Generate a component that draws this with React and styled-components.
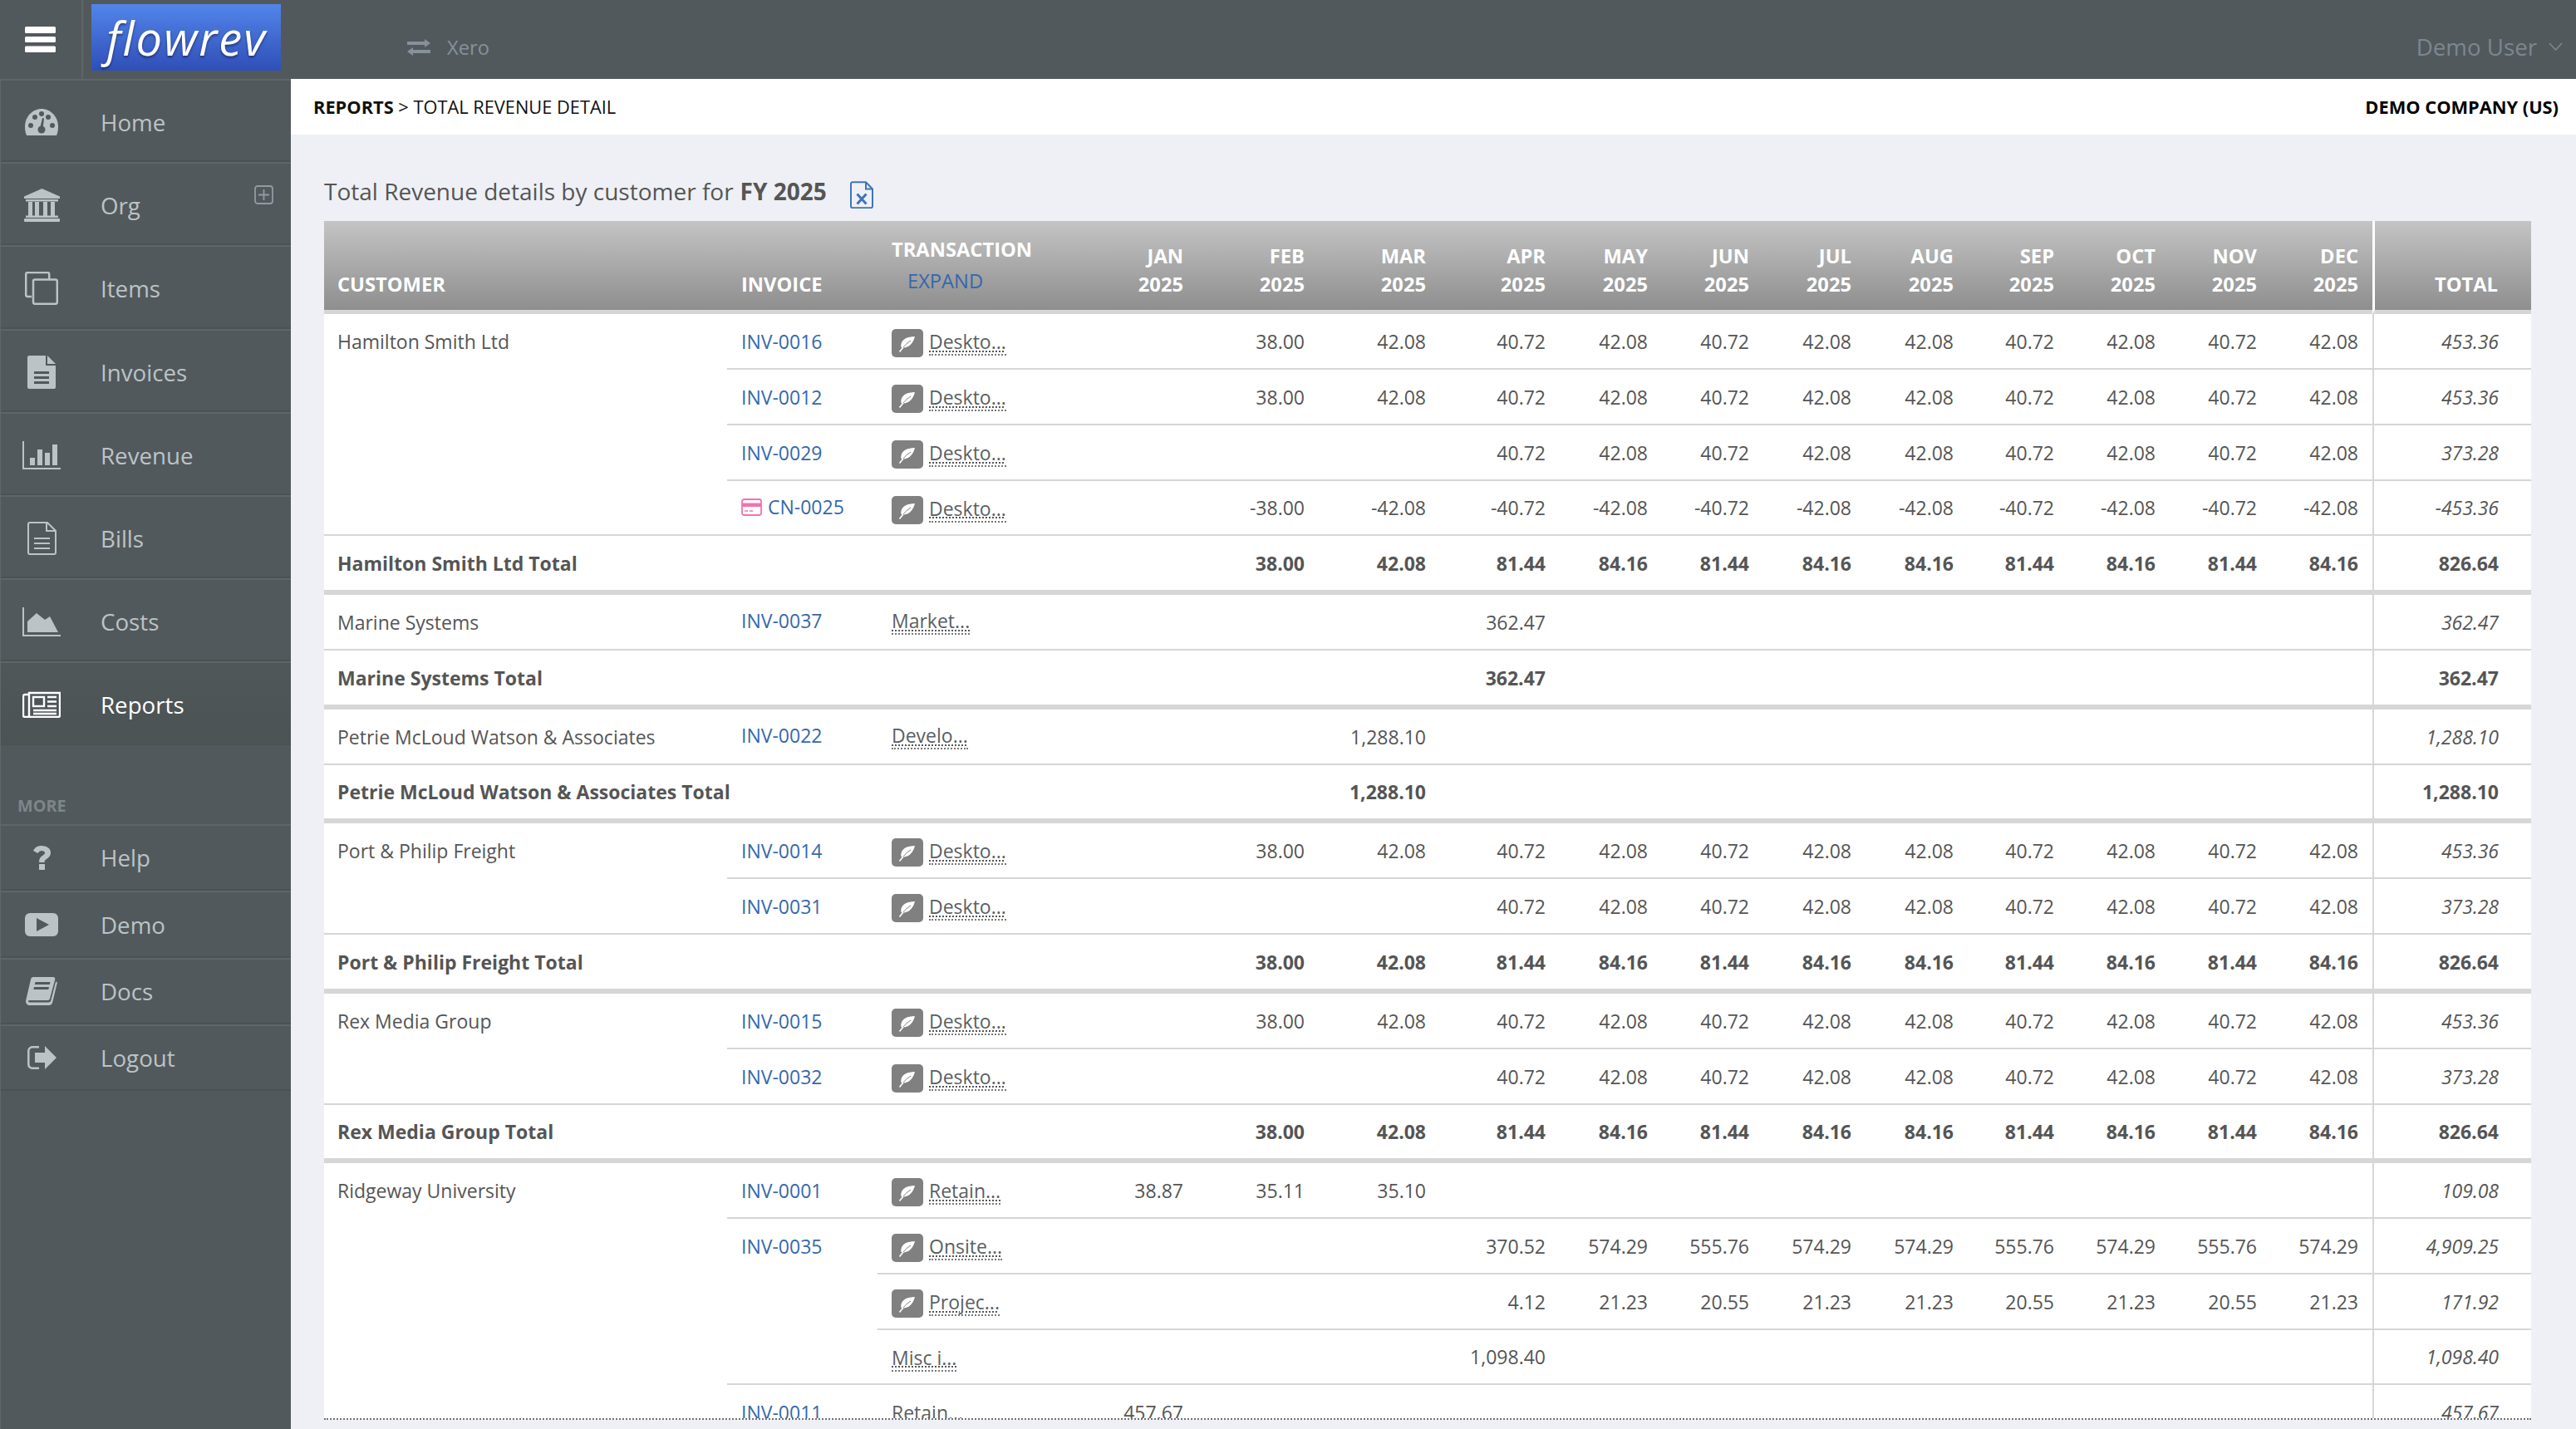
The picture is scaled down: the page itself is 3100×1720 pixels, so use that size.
import React from 'react';
import styled, { createGlobalStyle } from 'styled-components';

const Global = createGlobalStyle`
  html, body { margin: 0; padding: 0; background: #eef0f5; overflow: hidden; }
  body { font-family: "Open Sans", "Liberation Sans", sans-serif; }
  * { box-sizing: border-box; }
`;

const Page = styled.div`
  width: 3100px;
  height: 1720px;
  display: flex;
  flex-direction: column;
  overflow: hidden;
`;
const TopBar = styled.header`
  height: 95px;
  flex: none;
  display: flex;
  align-items: stretch;
  background: #52595c;
`;
const MenuCell = styled.div`
  width: 100px;
  flex: none;
  display: flex;
  align-items: center;
  padding: 0 0 0 30px;
  border-right: 2px solid #5e6668;
`;
const Logo = styled.div`
  width: 228px;
  height: 80px;
  margin: 5px 0 0 10px;
  display: flex;
  align-items: center;
  padding-left: 18px;
  background: linear-gradient(#5285ea, #2f4fb8);
  color: #fff;
  font-style: italic;
  font-size: 56px;
  letter-spacing: 2px;
  line-height: 1;
  text-shadow: 0 2px 3px rgba(0, 0, 0, 0.45);
`;
const Sync = styled.div`
  margin: 19px 0 0 152px;
  display: flex;
  align-items: center;
  gap: 20px;
  color: #87919a;
  font-size: 23.7px;
`;
const UserMenu = styled.div`
  margin: 0 16px 0 auto;
  display: flex;
  align-items: center;
  gap: 14px;
  padding-top: 17px;
  color: #7c8790;
  font-size: 27.7px;
`;
const Body = styled.div`
  flex: 1;
  display: flex;
  min-height: 0;
`;
const Side = styled.nav`
  width: 350px;
  flex: none;
  background: #52595c;
  border-left: 1px solid #5f6769;
`;
const NavItem = styled.a`
  position: relative;
  display: flex;
  align-items: center;
  height: ${(p) => (p.$small ? 80.3 : 100.2)}px;
  padding: ${(p) => (p.$small ? 0 : 4)}px 0 0 26px;
  border-top: 2px solid #5e6668;
  border-bottom: 2px solid #4a5254;
  color: ${(p) => (p.$active ? '#fff' : '#bcc3c6')};
  font-size: 27.7px;
  background: ${(p) => (p.$active ? 'linear-gradient(#4f5759, #4b5355)' : 'transparent')};
`;
const IconSlot = styled.span`
  width: 46px;
  height: 40px;
  flex: none;
  margin-right: 48px;
  display: flex;
  align-items: center;
  justify-content: center;
  color: inherit;
`;
const Expander = styled.span`
  position: absolute;
  left: 305px;
  top: 26px;
  display: flex;
  color: #8f9ca3;
`;
const MoreHeading = styled.div`
  height: 95.6px;
  padding: 59px 0 0 20px;
  color: #7d8689;
  font-size: 19.8px;
  font-weight: 700;
  line-height: 28px;
`;
const Main = styled.main`
  flex: 1;
  min-width: 0;
  display: flex;
  flex-direction: column;
`;
const CrumbBar = styled.div`
  height: 67px;
  flex: none;
  display: flex;
  align-items: center;
  justify-content: space-between;
  padding: 0 21px 0 27px;
  background: #fff;
  color: #111;
  font-size: 21.8px;
`;
const Crumb = styled.div`
  b { font-weight: 700; }
`;
const Company = styled.div`
  font-weight: 700;
  color: #000;
`;
const Content = styled.div`
  flex: 1;
  min-height: 0;
  padding-left: 40px;
  background: #eef0f5;
`;
const Title = styled.h1`
  margin: 0;
  height: 104px;
  padding-top: 50px;
  display: flex;
  align-items: flex-start;
  font-size: 28px;
  font-weight: 400;
  line-height: 36px;
  color: #555;
  b { font-weight: 700; margin-left: 8px; }
`;
const ExportIcon = styled.span`
  display: flex;
  margin: 6px 0 0 28px;
  color: #3f74b8;
`;
const TableClip = styled.div`
  width: 2656px;
  height: 1443px;
  overflow: hidden;
  background: #fff;
  border-bottom: 2px dotted #6f6f6f;
`;
const Table = styled.table`
  width: 2656px;
  table-layout: fixed;
  border-collapse: separate;
  border-spacing: 0;
  font-size: 23px;
  line-height: 34px;
  color: #555;
`;
const Head = styled.th`
  height: 112px;
  padding: 0 ${(p) => (p.$num ? 17 : 0)}px 14px ${(p) => p.$left || 0}px;
  border-bottom: 5px solid #d6d6d6;
  ${(p) => (p.$total ? 'border-left: 3px solid #fff; padding-right: 40px;' : '')}
  background: linear-gradient(#c4c4c4, #8e8e8e);
  color: #fff;
  font-size: 23.7px;
  font-weight: 700;
  vertical-align: bottom;
  text-align: ${(p) => (p.$num ? 'right' : 'left')};
`;
const TransHead = styled(Head)`
  vertical-align: top;
  padding-top: 17px;
  padding-bottom: 0;
`;
const Expand = styled.div`
  margin-top: 4px;
  padding-left: 19px;
  color: #3568ab;
  font-weight: 400;
`;
const Row = styled.tr`
  height: ${(p) => p.$h}px;
`;
const Customer = styled.td`
  padding: ${(p) => (p.$top ? '16px' : '0')} 0 0 16px;
  vertical-align: ${(p) => (p.$top ? 'top' : 'middle')};
  border-bottom: ${(p) => (p.$line ? '2px solid #d6d6d6' : '0')};
  white-space: nowrap;
`;
const TotalLabel = styled.td`
  padding-left: 16px;
  font-weight: 700;
  white-space: nowrap;
  border-bottom: 6px solid #d6d6d6;
`;
const InvoiceCell = styled.td`
  padding: ${(p) => (p.$top ? '16px' : '0')} 0 ${(p) => (p.$compact ? 4 : 0)}px 17px;
  vertical-align: ${(p) => (p.$top ? 'top' : 'middle')};
  border-bottom: 2px solid #d6d6d6;
  white-space: nowrap;
`;
const InvoiceLink = styled.a`
  display: inline-flex;
  align-items: center;
  gap: 7px;
  color: #3568ab;
`;
const TransCell = styled.td`
  padding: 0 0 ${(p) => (p.$compact ? 4 : 0)}px 17px;
  border-bottom: 2px solid #d6d6d6;
`;
const Trans = styled.div`
  display: flex;
  align-items: flex-start;
  gap: 7px;
  padding-top: ${(p) => (p.$plain ? 3 : 5)}px;
`;
const LeafBox = styled.span`
  width: 38px;
  height: 34px;
  flex: none;
  display: flex;
  border-radius: 5px;
  background: #808080;
`;
const TransText = styled.a`
  display: block;
  line-height: 30px;
  height: 32px;
  color: #5a5f63;
  text-decoration: underline dotted #555 2px;
  text-underline-offset: 2px;
  border-bottom: 2px dotted #777;
`;
const Num = styled.td`
  padding-right: 17px;
  text-align: right;
  white-space: nowrap;
  font-weight: ${(p) => (p.$bold ? 700 : 400)};
  border-bottom: ${(p) => (p.$bold ? 6 : 2)}px solid #d6d6d6;
`;
const RowTotal = styled.td`
  padding-right: 39px;
  text-align: right;
  white-space: nowrap;
  font-style: ${(p) => (p.$bold ? 'normal' : 'italic')};
  font-weight: ${(p) => (p.$bold ? 700 : 400)};
  border-left: 2px solid #d6d6d6;
  border-bottom: ${(p) => (p.$bold ? 6 : 2)}px solid #d6d6d6;
`;

/* Icons */
const Burger = () => (
  <svg width="37" height="31" viewBox="0 0 37 31" fill="#fff">
    <rect y="0" width="37" height="8" rx="1.5" />
    <rect y="12" width="37" height="7" rx="1.5" />
    <rect y="23.5" width="37" height="7.5" rx="1.5" />
  </svg>
);
const ExchangeIcon = () => (
  <svg width="28" height="20" viewBox="0 0 28 20" fill="currentColor">
    <path d="M0 3h21V0l7 5-7 5V7H0z" />
    <path d="M28 13H7v-3l-7 5 7 5v-3h21z" />
  </svg>
);
const ChevronIcon = () => (
  <svg width="17" height="10" viewBox="0 0 17 10" fill="none" stroke="currentColor" strokeWidth="1.6">
    <path d="M1 1l7.5 8L16 1" />
  </svg>
);
const GaugeIcon = () => (
  <svg width="40" height="32" viewBox="0 0 40 32">
    <path fill="currentColor" d="M2 32C.7 29 0 26 0 21.5 0 9.6 9 0 20 0s20 9.600 20 21.500c0 4.500-.7 7.500-2 10.500z" />
    <g fill="#52595c">
      <circle cx="7" cy="20" r="3" />
      <circle cx="12" cy="10" r="3" />
      <circle cx="20" cy="6" r="3" />
      <circle cx="28" cy="10" r="3" />
      <circle cx="33" cy="20" r="3" />
      <circle cx="20" cy="25" r="4.5" />
      <path d="M18 24l3-13 2 .5-1.500 13z" />
    </g>
  </svg>
);
const BankIcon = () => (
  <svg width="43" height="40" viewBox="0 0 43 40" fill="currentColor">
    <path d="M21.500 0L43 9.500V12H0V9.500z" />
    <rect x="2" y="13" width="39" height="2.5" />
    <rect x="5" y="16" width="5" height="17" />
    <rect x="13" y="16" width="5" height="17" />
    <rect x="23" y="16" width="5" height="17" />
    <rect x="32" y="16" width="5" height="17" />
    <rect x="2" y="32.5" width="39" height="2.5" />
    <rect x="0" y="36" width="43" height="4" rx="1" />
  </svg>
);
const CopyIcon = () => (
  <svg width="40" height="40" viewBox="0 0 40 40" fill="none" stroke="currentColor" strokeWidth="2.5">
    <path d="M8 30H3a2 2 0 0 1-1.800-2V3a2 2 0 0 1 2-2h24a2 2 0 0 1 2 2v6" />
    <rect x="10" y="9.5" width="28.8" height="29.3" rx="2" />
  </svg>
);
const FileSolidIcon = () => (
  <svg width="34" height="40" viewBox="0 0 34 40">
    <path fill="currentColor" d="M2 0h20v12h12v26a2 2 0 0 1-2 2H2a2 2 0 0 1-2-2V2a2 2 0 0 1 2-2z" />
    <path fill="currentColor" d="M24 0l10 10H24z" />
    <g fill="#52595c">
      <rect x="8" y="19" width="18" height="3" />
      <rect x="8" y="25" width="18" height="3" />
      <rect x="8" y="31" width="18" height="3" />
    </g>
  </svg>
);
const BarsIcon = () => (
  <svg width="46" height="34" viewBox="0 0 46 34" fill="currentColor">
    <path d="M0 0h2v32h44v2H0z" />
    <rect x="9" y="20" width="6" height="9" />
    <rect x="18" y="10" width="6" height="19" />
    <rect x="27" y="14" width="6" height="15" />
    <rect x="36" y="4" width="6" height="25" />
  </svg>
);
const FileLinesIcon = () => (
  <svg width="35" height="40" viewBox="0 0 35 40" fill="none" stroke="currentColor" strokeWidth="2">
    <path d="M24 1H3a2 2 0 0 0-2 2v34a2 2 0 0 0 2 2h29a2 2 0 0 0 2-2V11z" />
    <path d="M23 1v10h11" />
    <path d="M8 20h19M8 26h19M8 32h19" />
  </svg>
);
const AreaIcon = () => (
  <svg width="46" height="35" viewBox="0 0 46 35" fill="currentColor">
    <path d="M0 0h2v33h44v2H0z" />
    <path d="M6 30V17L17 7l10 8 6-4 10 19z" />
  </svg>
);
const PaperIcon = () => (
  <svg width="46" height="32" viewBox="0 0 46 32" fill="none" stroke="currentColor" strokeWidth="2.4">
    <path d="M7 4H3a2 2 0 0 0-2 2v23a2 2 0 0 0 2 2h40a2 2 0 0 0 2-2V2H8v28" />
    <rect x="13" y="7" width="13" height="11" />
    <path d="M30 7h11M30 12.500h11M30 18h11M13 23h28M13 27h28" />
  </svg>
);
const HelpIcon = () => (
  <svg width="22" height="29" viewBox="0 0 22 29" fill="currentColor">
    <path d="M1 6C3 2 6 0 11 0c6 0 11 3 11 8 0 4-2 6-5 8-2 1.500-2.500 2-2.500 4H8c0-4 1-6 4-8 2-1.300 3-2 3-3.500C15 7 13 6 11 6 9 6 8 7 6.500 9z" />
    <rect x="8" y="22" width="7" height="7" />
  </svg>
);
const VideoIcon = () => (
  <svg width="40" height="28" viewBox="0 0 40 28">
    <rect width="40" height="28" rx="6" fill="currentColor" />
    <path d="M14 6l15 8-15 8z" fill="#52595c" />
  </svg>
);
const BookIcon = () => (
  <svg width="38" height="34" viewBox="0 0 38 34">
    <path fill="currentColor" d="M9 0h24c2 0 2.600 1.500 2.200 3L29 26c-.5 1.500-1.500 2-3 2H5c-2.500 0-3 2-.5 2.500H27c2 0 2.800-.7 3.300-2.500L36 6c.2-.7 2-.3 1.800 1l-5.500 23c-.5 2.500-2 4-5 4H5c-3.500 0-5.500-3-4.800-6L6 3c.4-2 1.500-3 3-3z" />
    <path fill="#52595c" d="M11.500 6h18l-.7 3h-18zM10 12h18l-.7 3h-18z" />
  </svg>
);
const LogoutIcon = () => (
  <svg width="35" height="28" viewBox="0 0 35 28">
    <path fill="none" stroke="currentColor" strokeWidth="2.5" d="M14 1.300H6a4.500 4.500 0 0 0-4.700 4.500v16.400A4.500 4.500 0 0 0 6 26.700h8" />
    <path fill="currentColor" d="M21 0l14 14-14 14v-8H9V8h12z" />
  </svg>
);
const PlusBox = () => (
  <svg width="23" height="23" viewBox="0 0 23 23" fill="none" stroke="currentColor" strokeWidth="1.8">
    <rect x="1" y="1" width="21" height="21" rx="3" />
    <path d="M11.500 5v13M5 11.500h13" />
  </svg>
);
const ExcelIcon = () => (
  <svg width="28" height="33" viewBox="0 0 28 33" fill="none" stroke="currentColor" strokeWidth="2">
    <path d="M19 1.200H3a2 2 0 0 0-2 2v27a2 2 0 0 0 2 2h22a2 2 0 0 0 2-2V9.500z" />
    <path d="M19 1.500V9.500h8" />
    <path d="M8.500 15.500l11 12M19.500 15.500l-11 12" strokeWidth="3" />
  </svg>
);
const CardIcon = () => (
  <svg width="25" height="21" viewBox="0 0 25 21">
    <rect x="1" y="1" width="23" height="19" rx="2.5" fill="none" stroke="#f272ae" strokeWidth="1.8" />
    <rect x="1" y="5.5" width="23" height="4.5" fill="#f272ae" />
    <path d="M4 15h4M10 15h4" stroke="#f272ae" strokeWidth="1.6" />
  </svg>
);
const LeafIcon = () => (
  <svg width="38" height="34" viewBox="0 0 38 34">
    <path fill="#fff" d="M28 9c-9 .5-15 2.500-16.500 9-.5 2-.2 3.500.5 4.500 8 1 14-5 16-13.500z" />
    <path fill="none" stroke="#808080" strokeWidth="1" d="M23 14c-4 2.500-7 5.500-10 9" />
    <path fill="none" stroke="#fff" strokeWidth="1.6" d="M14 22l-4.500 5.500" />
  </svg>
);

const mainNav = [
  ['Home', GaugeIcon],
  ['Org', BankIcon, true],
  ['Items', CopyIcon],
  ['Invoices', FileSolidIcon],
  ['Revenue', BarsIcon],
  ['Bills', FileLinesIcon],
  ['Costs', AreaIcon],
  ['Reports', PaperIcon],
];
const moreNav = [
  ['Help', HelpIcon],
  ['Demo', VideoIcon],
  ['Docs', BookIcon],
  ['Logout', LogoutIcon],
];
const months = ['JAN', 'FEB', 'MAR', 'APR', 'MAY', 'JUN', 'JUL', 'AUG', 'SEP', 'OCT', 'NOV', 'DEC'];
const widths = [485, 181, 239, 146, 146, 146, 144, 123, 122, 123, 123, 121, 122, 122, 122, 191];

const full = ['', '38.00', '42.08', '40.72', '42.08', '40.72', '42.08', '42.08', '40.72', '42.08', '40.72', '42.08'];
const short = ['', '', '', '40.72', '42.08', '40.72', '42.08', '42.08', '40.72', '42.08', '40.72', '42.08'];
const neg = full.map((v) => (v ? `-${v}` : ''));
const sumVals = ['', '38.00', '42.08', '81.44', '84.16', '81.44', '84.16', '84.16', '81.44', '84.16', '81.44', '84.16'];
const only = (i, v) => months.map((_, k) => (k === i ? v : ''));
const pad = (vals) => [...vals, ...Array(12 - vals.length).fill('')];

const groups = [
  {
    name: 'Hamilton Smith Ltd',
    rows: [
      { h: 67, inv: 'INV-0016', leaf: 1, label: 'Deskto...', vals: full, total: '453.36' },
      { h: 67, inv: 'INV-0012', leaf: 1, label: 'Deskto...', vals: full, total: '453.36' },
      { h: 67, inv: 'INV-0029', leaf: 1, label: 'Deskto...', vals: short, total: '373.28' },
      { h: 66, inv: 'CN-0025', cn: 1, leaf: 1, label: 'Deskto...', vals: neg, total: '-453.36' },
    ],
    sum: { h: 71, vals: sumVals, total: '826.64' },
  },
  {
    name: 'Marine Systems',
    rows: [{ h: 67, inv: 'INV-0037', compact: 1, label: 'Market...', vals: only(3, '362.47'), total: '362.47' }],
    sum: { h: 71, vals: only(3, '362.47'), total: '362.47' },
  },
  {
    name: 'Petrie McLoud Watson & Associates',
    rows: [{ h: 67, inv: 'INV-0022', compact: 1, label: 'Develo...', vals: only(2, '1,288.10'), total: '1,288.10' }],
    sum: { h: 70, vals: only(2, '1,288.10'), total: '1,288.10' },
  },
  {
    name: 'Port & Philip Freight',
    rows: [
      { h: 67, inv: 'INV-0014', leaf: 1, label: 'Deskto...', vals: full, total: '453.36' },
      { h: 67, inv: 'INV-0031', leaf: 1, label: 'Deskto...', vals: short, total: '373.28' },
    ],
    sum: { h: 71, vals: sumVals, total: '826.64' },
  },
  {
    name: 'Rex Media Group',
    rows: [
      { h: 67, inv: 'INV-0015', leaf: 1, label: 'Deskto...', vals: full, total: '453.36' },
      { h: 67, inv: 'INV-0032', leaf: 1, label: 'Deskto...', vals: short, total: '373.28' },
    ],
    sum: { h: 70, vals: sumVals, total: '826.64' },
  },
  {
    name: 'Ridgeway University',
    open: true,
    rows: [
      { h: 67, inv: 'INV-0001', leaf: 1, label: 'Retain...', vals: pad(['38.87', '35.11', '35.10']), total: '109.08' },
      {
        h: 67,
        inv: 'INV-0035',
        span: 3,
        leaf: 1,
        label: 'Onsite...',
        vals: pad(['', '', '', '370.52', '574.29', '555.76', '574.29', '574.29', '555.76', '574.29', '555.76', '574.29']),
        total: '4,909.25',
      },
      {
        h: 67,
        skipInv: 1,
        leaf: 1,
        label: 'Projec...',
        vals: pad(['', '', '', '4.12', '21.23', '20.55', '21.23', '21.23', '20.55', '21.23', '20.55', '21.23']),
        total: '171.92',
      },
      { h: 66, skipInv: 1, plain: 1, label: 'Misc i...', vals: only(3, '1,098.40'), total: '1,098.40' },
      { h: 67, inv: 'INV-0011', plain: 1, label: 'Retain...', vals: only(0, '457.67'), total: '457.67' },
    ],
  },
];

const TransactionCell = ({ row }) => (
  <TransCell $compact={row.compact}>
    <Trans $plain={row.compact || row.plain}>
      {row.leaf ? (
        <LeafBox>
          <LeafIcon />
        </LeafBox>
      ) : null}
      <TransText>{row.label}</TransText>
    </Trans>
  </TransCell>
);

const Group = ({ group }) => (
  <>
    {group.rows.map((row, i) => {
      const single = group.rows.length === 1;
      return (
        <Row key={i} $h={row.h}>
          {i === 0 ? (
            <Customer rowSpan={group.rows.length} $top={!single} $line={!group.open}>
              {group.name}
            </Customer>
          ) : null}
          {row.skipInv ? null : (
            <InvoiceCell rowSpan={row.span || 1} $top={!!row.span} $compact={row.compact}>
              <InvoiceLink>
                {row.cn ? <CardIcon /> : null}
                {row.inv}
              </InvoiceLink>
            </InvoiceCell>
          )}
          <TransactionCell row={row} />
          {row.vals.map((v, k) => (
            <Num key={k}>{v}</Num>
          ))}
          <RowTotal>{row.total}</RowTotal>
        </Row>
      );
    })}
    {group.sum ? (
      <Row $h={group.sum.h}>
        <TotalLabel colSpan={3}>{group.name} Total</TotalLabel>
        {group.sum.vals.map((v, k) => (
          <Num key={k} $bold>
            {v}
          </Num>
        ))}
        <RowTotal $bold>{group.sum.total}</RowTotal>
      </Row>
    ) : null}
  </>
);

export default function App() {
  return (
    <Page>
      <Global />
      <TopBar>
        <MenuCell>
          <Burger />
        </MenuCell>
        <Logo>flowrev</Logo>
        <Sync>
          <ExchangeIcon />
          Xero
        </Sync>
        <UserMenu>
          Demo User
          <ChevronIcon />
        </UserMenu>
      </TopBar>
      <Body>
        <Side>
          {mainNav.map(([label, Icon, expandable]) => (
            <NavItem key={label} $active={label === 'Reports'}>
              <IconSlot>
                <Icon />
              </IconSlot>
              {label}
              {expandable ? (
                <Expander>
                  <PlusBox />
                </Expander>
              ) : null}
            </NavItem>
          ))}
          <MoreHeading>MORE</MoreHeading>
          {moreNav.map(([label, Icon]) => (
            <NavItem key={label} $small>
              <IconSlot>
                <Icon />
              </IconSlot>
              {label}
            </NavItem>
          ))}
        </Side>
        <Main>
          <CrumbBar>
            <Crumb>
              <b>REPORTS</b> &gt; TOTAL REVENUE DETAIL
            </Crumb>
            <Company>DEMO COMPANY (US)</Company>
          </CrumbBar>
          <Content>
            <Title>
              Total Revenue details by customer for <b>FY 2025</b>
              <ExportIcon>
                <ExcelIcon />
              </ExportIcon>
            </Title>
            <TableClip>
              <Table>
                <colgroup>
                  {widths.map((w, i) => (
                    <col key={i} width={w} />
                  ))}
                </colgroup>
                <thead>
                  <tr>
                    <Head $left={16}>CUSTOMER</Head>
                    <Head $left={17}>INVOICE</Head>
                    <TransHead $left={17}>
                      TRANSACTION
                      <Expand>EXPAND</Expand>
                    </TransHead>
                    {months.map((m) => (
                      <Head key={m} $num>
                        {m}
                        <br />
                        2025
                      </Head>
                    ))}
                    <Head $num $total>
                      TOTAL
                    </Head>
                  </tr>
                </thead>
                <tbody>
                  {groups.map((g) => (
                    <Group key={g.name} group={g} />
                  ))}
                </tbody>
              </Table>
            </TableClip>
          </Content>
        </Main>
      </Body>
    </Page>
  );
}
